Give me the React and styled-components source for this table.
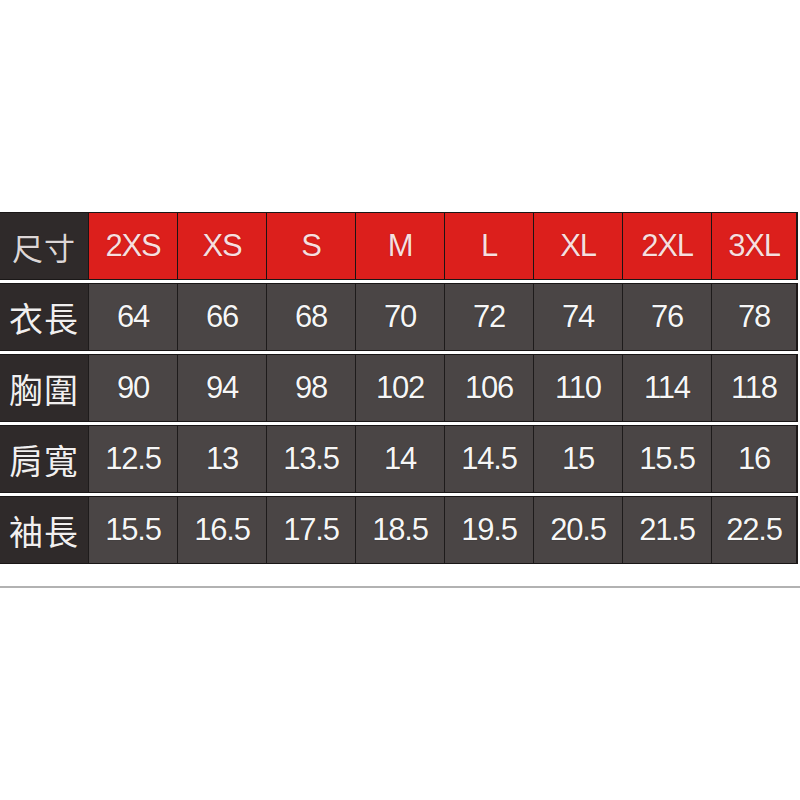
import React from "react";
import styled, { createGlobalStyle } from "styled-components";

const Global = createGlobalStyle`
  html, body { margin: 0; padding: 0; background: #ffffff; }
  body { width: 800px; height: 800px; overflow: hidden; }
`;

const Page = styled.div`
  width: 800px;
  height: 800px;
  background: #fff;
  padding-top: 212px;
  box-sizing: border-box;
`;

const Table = styled.div`
  width: 798px;
  display: flex;
  flex-direction: column;
  gap: 3px;
`;

const Row = styled.div`
  display: grid;
  grid-template-columns: 88px repeat(7, 88px) 1fr;
  height: 68px;
  background: ${p => (p.head ? "#1c1414" : "#1e1b1b")};
  border-top: 1px solid #1a1717;
  border-bottom: 1px solid #1a1717;
  border-right: 2px solid #1d1919;
  box-sizing: border-box;
  column-gap: 1px;
`;

const Label = styled.div`
  display: flex;
  align-items: center;
  justify-content: center;
  background: #2f2a2a;
  color: ${p => (p.head ? "#dcd6d6" : "#f1efef")};
  font-family: "Noto Sans CJK TC", "Noto Sans CJK SC", sans-serif;
  font-size: ${p => (p.head ? "31px" : "34px")};
  letter-spacing: 1px;
  text-shadow: 0 0 1px rgba(0, 0, 0, 0.6);
`;

const Cell = styled.div`
  display: flex;
  align-items: center;
  justify-content: center;
  background: ${p => (p.head ? "#dc1f1c" : "#4a4545")};
  color: ${p => (p.head ? "#f8dede" : "#f6f6f6")};
  font-family: "Liberation Sans", Arial, sans-serif;
  font-size: 31px;
  letter-spacing: -1.2px;
  text-shadow: ${p =>
    p.head ? "0 0 1px rgba(120, 0, 0, 0.8)" : "0 0 1px rgba(0, 0, 0, 0.7)"};
`;

const Rule = styled.div`
  margin-top: 22px;
  height: 2px;
  width: 800px;
  background: #b2b2b2;
`;

const sizes = ["2XS", "XS", "S", "M", "L", "XL", "2XL", "3XL"];

const rows = [
  { name: "衣長", vals: ["64", "66", "68", "70", "72", "74", "76", "78"] },
  { name: "胸圍", vals: ["90", "94", "98", "102", "106", "110", "114", "118"] },
  { name: "肩寬", vals: ["12.5", "13", "13.5", "14", "14.5", "15", "15.5", "16"] },
  { name: "袖長", vals: ["15.5", "16.5", "17.5", "18.5", "19.5", "20.5", "21.5", "22.5"] },
];

export default function App() {
  return (
    <Page>
      <Global />
      <Table>
        <Row head>
          <Label head>尺寸</Label>
          {sizes.map(s => (
            <Cell head key={s}>{s}</Cell>
          ))}
        </Row>
        {rows.map(r => (
          <Row key={r.name}>
            <Label>{r.name}</Label>
            {r.vals.map((v, i) => (
              <Cell key={i}>{v}</Cell>
            ))}
          </Row>
        ))}
      </Table>
      <Rule />
    </Page>
  );
}
